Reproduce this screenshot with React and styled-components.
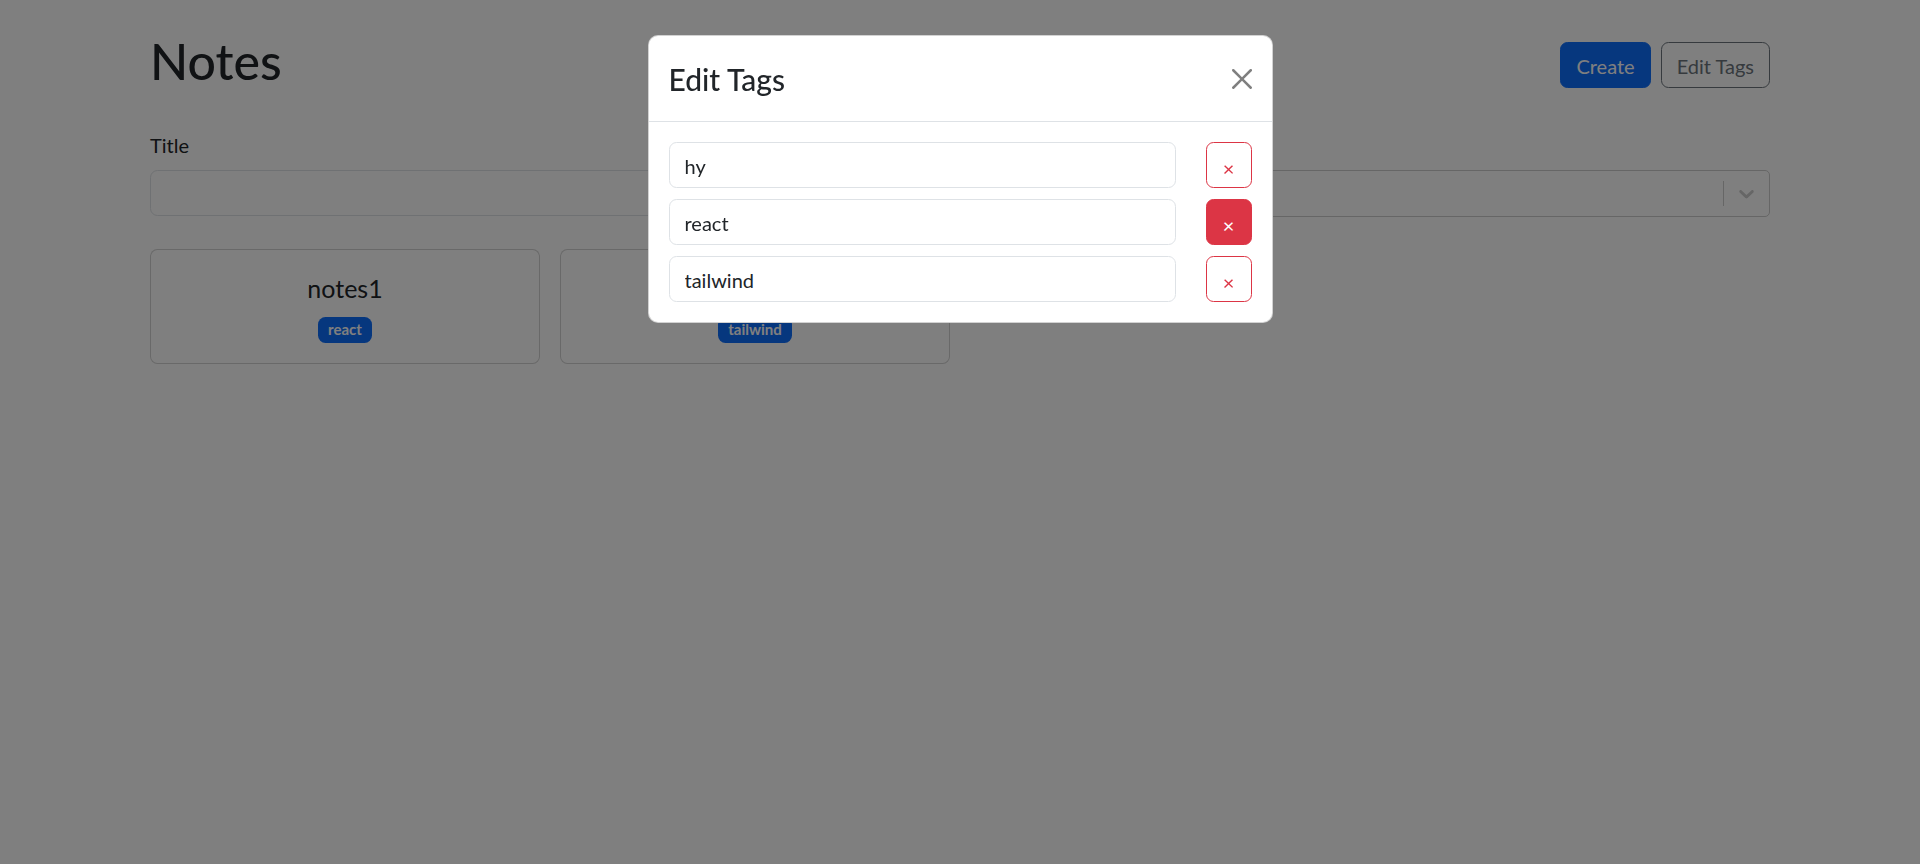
import React, { useState } from 'react';
import styled, { createGlobalStyle } from 'styled-components';

const GlobalStyle = createGlobalStyle`
  * { box-sizing: border-box; }
  body {
    margin: 0;
    background: #fff;
    color: #212529;
    font-family: Lato, "Noto Sans", sans-serif;
    font-size: 20px;
    line-height: 1.5;
  }
`

const Container = styled.div`
  max-width: 1650px;
  margin: 30px auto;
  padding: 0 15px;
`

const HeaderRow = styled.div`
  display: flex;
  align-items: center;
  justify-content: space-between;
  margin-bottom: 30px;
`

const PageTitle = styled.h1`
  margin: 0 0 9px;
  padding-top: 1px;
  font-size: 50px;
  line-height: 60px;
  font-weight: 500;
`

const Actions = styled.div`
  display: flex;
  gap: 10px;
`

const Button = styled.button`
  font-family: inherit;
  font-size: 20px;
  line-height: 30px;
  padding: 8px 15px 6px;
  border-radius: 7.5px;
  border: 1px solid ${p => (p.$primary ? '#0d6efd' : '#6c757d')};
  background: ${p => (p.$primary ? '#0d6efd' : 'transparent')};
  color: ${p => (p.$primary ? '#fff' : '#6c757d')};
`

const FilterRow = styled.div`
  display: grid;
  grid-template-columns: 1fr 1fr;
  column-gap: 30px;
  margin-bottom: 32px;
`

const Label = styled.label`
  display: block;
  margin-bottom: 10px;
  line-height: 30px;
`

const TextInput = styled.input`
  display: block;
  width: 100%;
  font-family: inherit;
  font-size: 20px;
  line-height: 30px;
  padding: 8px 15px 6px;
  color: #212529;
  background: #fff;
  border: 1px solid #dee2e6;
  border-radius: 7.5px;
  outline: none;
`

const SelectControl = styled.div`
  display: flex;
  align-items: stretch;
  height: 46.5px;
  border: 1px solid #ccc;
  border-radius: 5px;
  background: #fff;
`

const SelectValue = styled.div`
  flex: 1;
  display: flex;
  align-items: center;
  padding: 2.5px 12.5px;
  color: #808080;
`

const Separator = styled.span`
  width: 1px;
  margin: 10px 0;
  background: #ccc;
`

const Chevron = styled.div`
  display: flex;
  align-items: center;
  padding: 10px;
  color: #ccc;
`

const CardGrid = styled.div`
  display: grid;
  grid-template-columns: repeat(4, 1fr);
  gap: 20px;
`

const Card = styled.div`
  display: flex;
  flex-direction: column;
  align-items: center;
  justify-content: center;
  gap: 10px;
  padding: 20px;
  border: 1px solid rgba(0, 0, 0, 0.175);
  border-radius: 7.5px;
  background: #fff;
`

const CardTitle = styled.span`
  font-size: 25px;
  line-height: 37.5px;
`

const BadgeRow = styled.div`
  display: flex;
  flex-wrap: wrap;
  justify-content: center;
  gap: 5px;
`

const Badge = styled.span`
  display: inline-block;
  padding: 5.25px 9.75px;
  font-size: 15px;
  font-weight: 700;
  line-height: 1;
  color: #fff;
  background: #0d6efd;
  border-radius: 7.5px;
`

const Backdrop = styled.div`
  position: fixed;
  inset: 0;
  background: rgba(0, 0, 0, 0.5);
`

const ModalWrap = styled.div`
  position: fixed;
  inset: 0;
  overflow: auto;
`

const Dialog = styled.div`
  width: 625px;
  margin: 35px auto;
  background: #fff;
  border: 1px solid rgba(0, 0, 0, 0.175);
  border-radius: 10px;
`

const ModalHeader = styled.div`
  display: flex;
  align-items: center;
  justify-content: space-between;
  padding: 20px;
  border-bottom: 1px solid #dee2e6;
`

const ModalTitle = styled.div`
  font-size: 30px;
  line-height: 45px;
  font-weight: 500;
  padding-top: 1px;
  margin-bottom: -1px;
`

const CloseButton = styled.button`
  display: flex;
  padding: 0;
  border: 0;
  background: transparent;
  opacity: 0.5;
`

const ModalBody = styled.div`
  display: flex;
  flex-direction: column;
  gap: 11px;
  padding: 20px;
`

const TagRow = styled.div`
  display: grid;
  grid-template-columns: 1fr auto;
  column-gap: 30px;
`

const DeleteButton = styled.button`
  width: 46px;
  height: 46px;
  padding: 6px 0 0;
  font-family: inherit;
  font-size: 20px;
  line-height: 1;
  border: 1px solid #dc3545;
  border-radius: 7.5px;
  background: ${p => (p.$active ? '#dc3545' : 'transparent')};
  color: ${p => (p.$active ? '#fff' : '#dc3545')};
`

const notes = [
  { id: 1, title: 'notes1', tags: ['react'] },
  { id: 2, title: 'notes2', tags: ['tailwind'] },
]

const App = () => {

  const [tags, setTags] = useState(['hy', 'react', 'tailwind'])

  const rename = (i) => (e) => {
    const next = [...tags]
    next[i] = e.target.value
    setTags(next)
  }

  return (
    <>
      <GlobalStyle />
      <Container>

        <HeaderRow>
          <PageTitle>Notes</PageTitle>
          <Actions>
            <Button $primary>Create</Button>
            <Button>Edit Tags</Button>
          </Actions>
        </HeaderRow>

        <FilterRow>
          <div>
            <Label>Title</Label>
            <TextInput type="text" />
          </div>
          <div>
            <Label>Tags</Label>
            <SelectControl>
              <SelectValue>Select...</SelectValue>
              <Separator />
              <Chevron>
                <svg width="25" height="25" viewBox="0 0 20 20" fill="currentColor">
                  <path d="M4.516 7.548c0.436-0.446 1.043-0.481 1.576 0l3.908 3.747 3.908-3.747c0.533-0.481 1.141-0.446 1.574 0 0.436 0.445 0.408 1.197 0 1.615-0.406 0.418-4.695 4.502-4.695 4.502-0.217 0.223-0.502 0.335-0.787 0.335s-0.57-0.112-0.789-0.335c0 0-4.287-4.084-4.695-4.502s-0.436-1.17 0-1.615z" />
                </svg>
              </Chevron>
            </SelectControl>
          </div>
        </FilterRow>

        <CardGrid>
          {notes.map((note) => (
            <Card key={note.id}>
              <CardTitle>{note.title}</CardTitle>
              <BadgeRow>
                {note.tags.map((t) => <Badge key={t}>{t}</Badge>)}
              </BadgeRow>
            </Card>
          ))}
        </CardGrid>

      </Container>

      <Backdrop />

      <ModalWrap>
        <Dialog>
          <ModalHeader>
            <ModalTitle>Edit Tags</ModalTitle>
            <CloseButton aria-label="Close">
              <svg width="20" height="20" viewBox="0 0 16 16">
                <path d="M.293.293a1 1 0 0 1 1.414 0L8 6.586 14.293.293a1 1 0 1 1 1.414 1.414L9.414 8l6.293 6.293a1 1 0 0 1-1.414 1.414L8 9.414l-6.293 6.293a1 1 0 0 1-1.414-1.414L6.586 8 .293 1.707a1 1 0 0 1 0-1.414z" />
              </svg>
            </CloseButton>
          </ModalHeader>
          <ModalBody>
            {tags.map((tag, i) => (
              <TagRow key={i}>
                <TextInput type="text" value={tag} onChange={rename(i)} />
                <DeleteButton $active={i === 1}>×</DeleteButton>
              </TagRow>
            ))}
          </ModalBody>
        </Dialog>
      </ModalWrap>
    </>
  )
}

export default App;
